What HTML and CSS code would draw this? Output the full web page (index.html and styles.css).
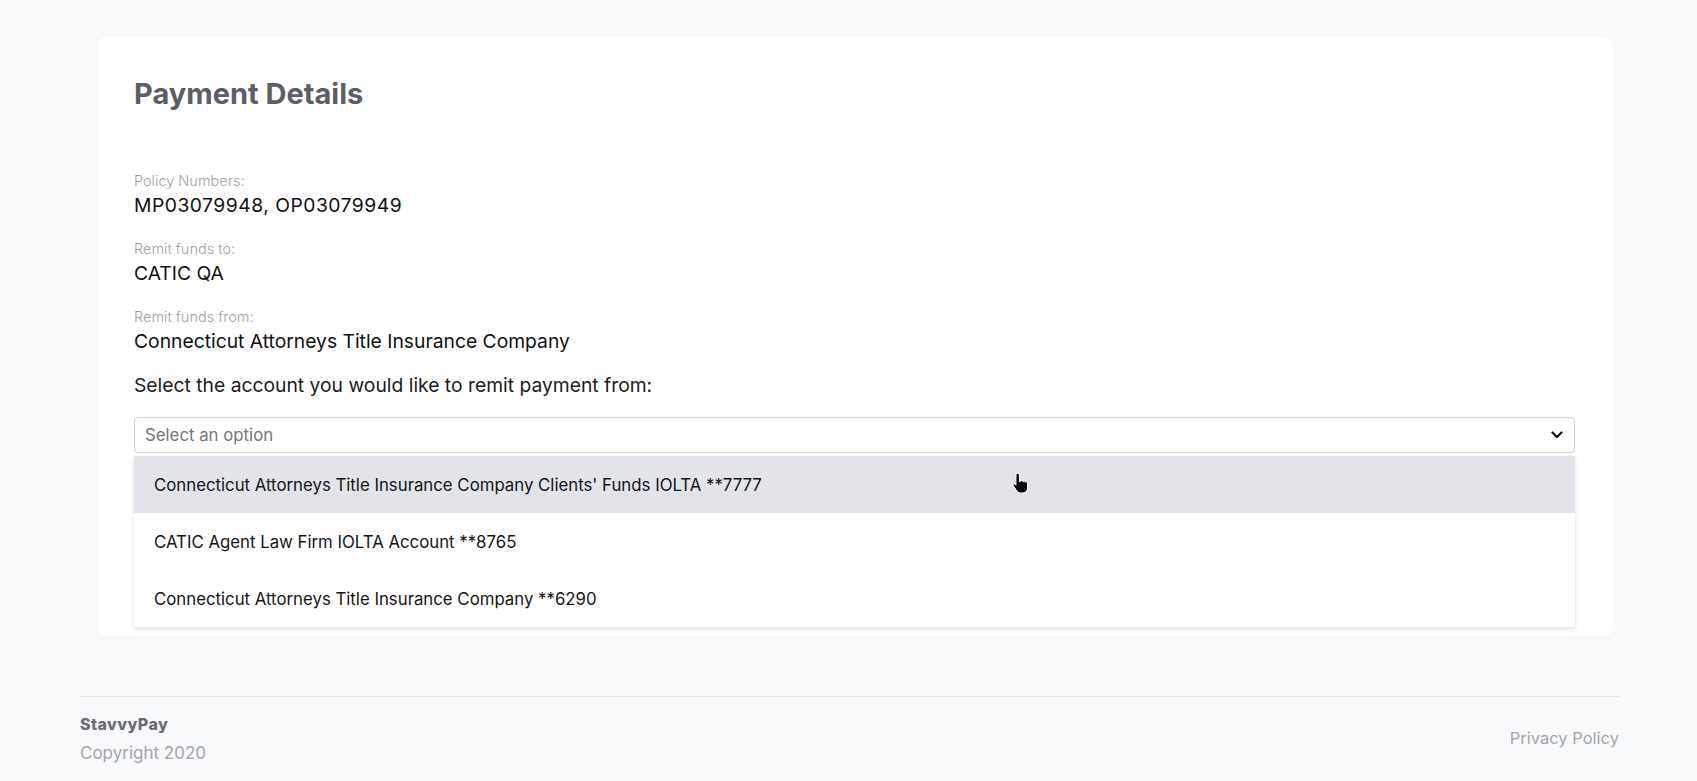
FILE: index.html
```html
<!DOCTYPE html>
<html lang="en">
<head>
  <meta charset="UTF-8" />
  <meta name="viewport" content="width=device-width, initial-scale=1.0" />
  <title>StavvyPay - Payment Details</title>
  <link rel="stylesheet" href="styles.css">
</head>
<body>
  <div class="page">
    <div class="card">
      <h1 class="title">Payment Details</h1>

      <div class="field first">
        <div class="label">Policy Numbers:</div>
        <div class="value numbers">MP03079948, OP03079949</div>
      </div>
      <div class="field">
        <div class="label">Remit funds to:</div>
        <div class="value">CATIC QA</div>
      </div>
      <div class="field">
        <div class="label">Remit funds from:</div>
        <div class="value">Connecticut Attorneys Title Insurance Company</div>
      </div>

      <div class="prompt">Select the account you would like to remit payment from:</div>

      <div class="select">
        <span class="placeholder">Select an option</span>
        <svg class="chevron" width="12" height="8" viewBox="0 0 12 8">
          <path d="M1.5 1.5 L6 6 L10.5 1.5" fill="none" stroke="#111" stroke-width="2.2" stroke-linecap="round" stroke-linejoin="round"/>
        </svg>
      </div>

      <div class="menu">
        <div class="option active">
          Connecticut Attorneys Title Insurance Company Clients' Funds IOLTA **7777
          <svg class="cursor" width="22" height="24" viewBox="0 0 20 22">
            <path d="M6 1c1 0 1.7.7 1.7 1.7v6l.8-.3c.4-1 2-1 2.4.2.6-.7 2-.5 2.2.5.8-.5 2.1 0 2.1 1.1v3.8c0 3.2-2.2 5.4-5.2 5.4H9c-1.7 0-2.9-.7-3.8-2L1.9 12.6c-.6-.9.2-2.1 1.3-1.7l1.2.6V2.7C4.4 1.7 5 1 6 1z" fill="#000" stroke="#fff" stroke-width="1"/>
          </svg>
        </div>
        <div class="option">CATIC Agent Law Firm IOLTA Account **8765</div>
        <div class="option">Connecticut Attorneys Title Insurance Company **6290</div>
      </div>
    </div>

    <footer class="footer">
      <div class="brand">
        <div class="brand-name">StavvyPay</div>
        <div class="copyright">Copyright 2020</div>
      </div>
      <a class="privacy" href="#">Privacy Policy</a>
    </footer>
  </div>
</body>
</html>
```

FILE: styles.css
```css
body {
  margin: 0;
  font-family: 'Inter', 'Roboto', sans-serif;
  background-color: #f8f9fb;
  color: #1b1b1d;
  min-height: 781px;
}
.page {
  padding: 37px 78px 0 80px;
}
.card {
  margin: 0 6px 0 18px;
  background-color: #ffffff;
  border-radius: 8px;
  padding: 40px 38px 9px 36px;
  box-shadow: 0 0 4px rgba(0, 0, 0, 0.02);
}
.title {
  margin: 0;
  font-size: 29px;
  line-height: 34px;
  font-weight: 700;
  color: #5b5d67;
}
.field {
  margin-top: 23px;
}
.field.first {
  margin-top: 61px;
}
.label {
  font-size: 14.5px;
  line-height: 18px;
  font-weight: 300;
  color: #a2a2a4;
}
.value {
  margin-top: 3px;
  font-size: 19.3px;
  line-height: 24px;
  color: #111;
}
.value.numbers {
  letter-spacing: 0.5px;
}
.prompt {
  margin-top: 20px;
  font-size: 19.3px;
  line-height: 24px;
  color: #1b1b1d;
}
.select {
  margin-top: 20px;
  height: 36px;
  border: 1px solid #cfd1d5;
  border-radius: 4px;
  display: flex;
  align-items: center;
  justify-content: space-between;
  padding: 0 10px;
  box-sizing: border-box;
}
.placeholder {
  font-size: 16.8px;
  color: #73767b;
}
.chevron {
  margin-right: 1px;
}
.menu {
  margin-top: 3px;
  background-color: #ffffff;
  box-shadow: 0 2px 5px rgba(0, 0, 0, 0.13);
  border-radius: 0 0 3px 3px;
}
.option {
  position: relative;
  height: 57px;
  display: flex;
  align-items: center;
  padding: 0 20px;
  font-size: 16.8px;
  color: #151517;
}
.option.active {
  background-color: #e2e4e9;
}
.cursor {
  position: absolute;
  left: 877px;
  top: 16px;
}
.footer {
  margin-top: 60px;
  border-top: 1px solid #e4e6e9;
  padding-top: 18px;
  display: flex;
  justify-content: space-between;
  align-items: center;
}
.brand-name {
  font-weight: 800;
  font-size: 16px;
  line-height: 18px;
  letter-spacing: 0.4px;
  color: #6b6d73;
}
.copyright {
  margin-top: 10px;
  font-size: 17px;
  line-height: 20px;
  color: #a4a6aa;
}
.privacy {
  font-size: 16.5px;
  color: #a4a6aa;
  text-decoration: none;
  margin-bottom: 2px;
}
```
